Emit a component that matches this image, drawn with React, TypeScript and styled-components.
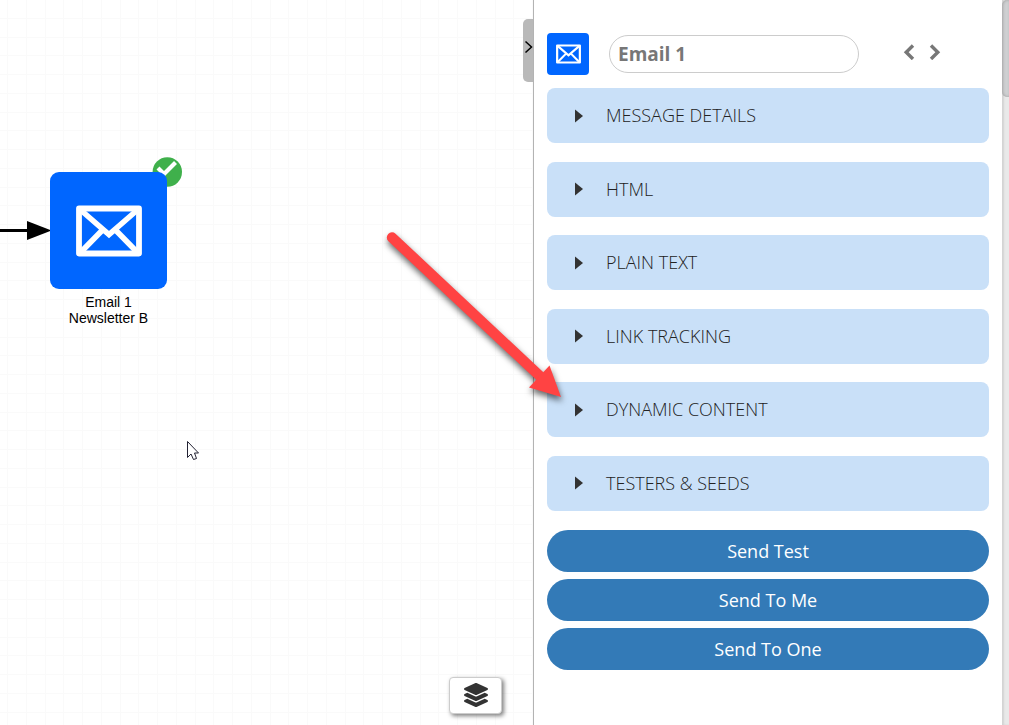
import React from "react";
import styled, { createGlobalStyle } from "styled-components";
import { FaLayerGroup } from "react-icons/fa";

const GlobalStyle = createGlobalStyle`
  *, *::before, *::after { box-sizing: border-box; }
  body {
    margin: 0;
    background: #fff;
    color: #333;
    font-family: "Open Sans", "Noto Sans", sans-serif;
  }
  button, input { font-family: inherit; margin: 0; }
`;

const Page = styled.div`
  position: relative;
  display: flex;
  min-height: 100vh;
  overflow: hidden;
`;

const gridStops = (stops: number[]) =>
  stops
    .map((s) => `transparent ${s}px, #fafafa ${s}px, #fafafa ${s + 1}px, transparent ${s + 1}px`)
    .join(", ");

const Canvas = styled.main`
  position: relative;
  flex: 1;
  min-width: 0;
  background-image:
    linear-gradient(to right, ${gridStops([7, 26, 45, 63])}),
    linear-gradient(to bottom, ${gridStops([18, 37, 55, 74])});
  background-size: 75px 75px;
`;

const Connector = styled.svg`
  position: absolute;
  left: 0;
  top: 220px;
`;

const Node = styled.div`
  position: absolute;
  left: 50px;
  top: 172px;
  width: 117px;
  display: flex;
  flex-direction: column;
  align-items: center;
`;

const NodeTile = styled.div`
  position: relative;
  display: flex;
  align-items: center;
  justify-content: center;
  width: 117px;
  height: 117px;
  border-radius: 9px;
  background: #0066ff;
`;

const NodeBadge = styled.svg`
  position: absolute;
  left: 102px;
  top: -15px;
`;

const NodeLabel = styled.div`
  padding-top: 5px;
  color: #000;
  font: 14px/16px "Liberation Sans", Arial, sans-serif;
  text-align: center;
  white-space: nowrap;
`;

const Cursor = styled.svg`
  position: absolute;
  left: 186px;
  top: 440px;
`;

const LayersButton = styled.button`
  position: absolute;
  right: 31px;
  bottom: 11px;
  display: flex;
  align-items: center;
  justify-content: center;
  width: 53px;
  height: 37px;
  padding: 0 0 2px;
  border: 1px solid #ccc;
  border-radius: 4px;
  background: #fff;
  color: #333;
  box-shadow: 2px 2px 4px rgba(0, 0, 0, 0.5);
`;

const CollapseHandle = styled.button`
  position: absolute;
  right: 0;
  top: 19px;
  display: flex;
  align-items: flex-start;
  justify-content: center;
  width: 10px;
  height: 63px;
  padding: 21px 0 0;
  border: 0;
  border-radius: 5px 0 0 5px;
  background: #b9b9b9;
`;

const Panel = styled.aside`
  display: flex;
  flex: 0 0 476px;
  border-left: 1px solid #b3b3b3;
  background: #fff;
`;

const PanelBody = styled.div`
  flex: 1;
  min-width: 0;
  padding: 33px 13px;
`;

const ScrollTrack = styled.div`
  width: 7px;
  background: #e9e9e9;
  box-shadow: inset 2px 0 2px #d3d3d3;
`;

const ScrollThumb = styled.div`
  height: 97px;
  border-radius: 5px 0 0 5px;
  background: #cfd0d2;
  box-shadow: inset 1px 0 3px #a5a5a5;
`;

const PanelHeader = styled.header`
  display: flex;
  align-items: center;
  margin-bottom: 13px;
`;

const HeaderTile = styled.div`
  display: flex;
  align-items: center;
  justify-content: center;
  width: 42px;
  height: 42px;
  border-radius: 4px;
  background: #0066ff;
`;

const NameInput = styled.input`
  width: 250px;
  height: 38px;
  margin-left: 20px;
  padding: 0 8px;
  border: 1px solid #ccc;
  border-radius: 19px;
  background: #fff;
  color: #777;
  font-size: 19px;
  font-weight: 700;
`;

const Pager = styled.nav`
  display: flex;
  gap: 14px;
  margin: 0 0 4px 44px;
`;

const PagerButton = styled.button`
  display: flex;
  padding: 0;
  border: 0;
  background: none;
`;

const SectionList = styled.div`
  display: flex;
  flex-direction: column;
  justify-content: space-between;
  min-height: 423px;
`;

const Section = styled.button`
  display: flex;
  align-items: center;
  gap: 23px;
  height: 55px;
  padding: 0 28px;
  border: 0;
  border-radius: 8px;
  background: #c9e0f8;
  color: #222;
  font-size: 18px;
  font-weight: 300;
  line-height: 24px;
  text-align: left;
`;

const SectionTitle = styled.span`
  padding-bottom: 1px;
`;

const Actions = styled.div`
  display: flex;
  flex-direction: column;
  gap: 7px;
  margin-top: 19px;
`;

const ActionButton = styled.button`
  height: 42px;
  padding: 0;
  border: 0;
  border-radius: 21px;
  background: #337ab7;
  color: #fff;
  font-size: 18px;
  line-height: 24px;
`;

const Pointer = styled.svg`
  position: absolute;
  top: 226px;
  right: 429px;
  filter: drop-shadow(1px 4px 3px rgba(0, 0, 0, 0.6));
  pointer-events: none;
`;

function Envelope({ width, height }: { width: number; height: number }) {
  return (
    <svg width={width} height={height} viewBox="0 0 66 52" fill="none" stroke="#fff" aria-hidden="true">
      <rect x="3" y="3.500" width="60" height="45" strokeWidth="5.800" strokeLinejoin="round" />
      <path d="M3.500 4 L33 29.500 L62.500 4 M4 48 L26.500 25 M62 48 L39.500 25" strokeWidth="5.600" />
    </svg>
  );
}

function Chevron({ flip }: { flip?: boolean }) {
  return (
    <svg width="12" height="16" viewBox="0 0 12 16" fill="none" stroke="#777" strokeWidth="3.400" aria-hidden="true">
      <path d={flip ? "M2 1.500 L8.800 8.200 L2 15" : "M10 1.500 L3.200 8.200 L10 15"} />
    </svg>
  );
}

const sections = ["MESSAGE DETAILS", "HTML", "PLAIN TEXT", "LINK TRACKING", "DYNAMIC CONTENT", "TESTERS & SEEDS"];
const actions = ["Send Test", "Send To Me", "Send To One"];

export default function App() {
  return (
    <Page>
      <GlobalStyle />
      <Canvas>
        <Connector width="52" height="22" aria-hidden="true">
          <path d="M0 10.500 H30" stroke="#000" strokeWidth="3" />
          <path d="M27 1 L51.500 10.500 L27 20 Z" />
        </Connector>
        <Node>
          <NodeBadge width="30" height="30" aria-hidden="true">
            <circle cx="15.300" cy="15" r="14.700" fill="#3fb04b" />
            <path d="M6 11 L12 17 L23.500 5.500" fill="none" stroke="#fff" strokeWidth="4.200" />
          </NodeBadge>
          <NodeTile>
            <Envelope width={66} height={52} />
          </NodeTile>
          <NodeLabel>
            Email 1<br />
            Newsletter B
          </NodeLabel>
        </Node>
        <Cursor width="14" height="22" aria-hidden="true">
          <path
            d="M1.500 1.500 V17.500 L5 14 L7.500 19.500 L10.500 18.500 L8.500 13 H12.500 Z"
            fill="#fff"
            stroke="#223"
          />
        </Cursor>
        <LayersButton aria-label="Layers">
          <FaLayerGroup size={24} />
        </LayersButton>
        <CollapseHandle aria-label="Collapse panel">
          <svg width="9" height="14" viewBox="0 0 9 14" fill="none" stroke="#000" strokeWidth="1.500" aria-hidden="true">
            <path d="M1.500 1.500 L7.500 7 L1.500 12.500" />
          </svg>
        </CollapseHandle>
      </Canvas>

      <Panel>
        <PanelBody>
          <PanelHeader>
            <HeaderTile>
              <Envelope width={25} height={20} />
            </HeaderTile>
            <NameInput aria-label="Name" defaultValue="Email 1" />
            <Pager aria-label="Messages">
              <PagerButton aria-label="Previous">
                <Chevron />
              </PagerButton>
              <PagerButton aria-label="Next">
                <Chevron flip />
              </PagerButton>
            </Pager>
          </PanelHeader>
          <SectionList>
            {sections.map((title) => (
              <Section key={title} aria-expanded="false">
                <svg width="8" height="14" aria-hidden="true">
                  <path d="M0 0.500 L8 7 L0 13.500 Z" fill="#333" />
                </svg>
                <SectionTitle>{title}</SectionTitle>
              </Section>
            ))}
          </SectionList>
          <Actions>
            {actions.map((label) => (
              <ActionButton key={label}>{label}</ActionButton>
            ))}
          </Actions>
        </PanelBody>
        <ScrollTrack>
          <ScrollThumb />
        </ScrollTrack>
      </Panel>

      <Pointer width="200" height="180" viewBox="380 226 200 180" aria-hidden="true">
        <path d="M392 237.500 L543 379" stroke="#ff4343" strokeWidth="10.400" strokeLinecap="round" />
        <path d="M549.500 365.500 L561 397 L529 387.500 Z" fill="#ff4343" />
      </Pointer>
    </Page>
  );
}
